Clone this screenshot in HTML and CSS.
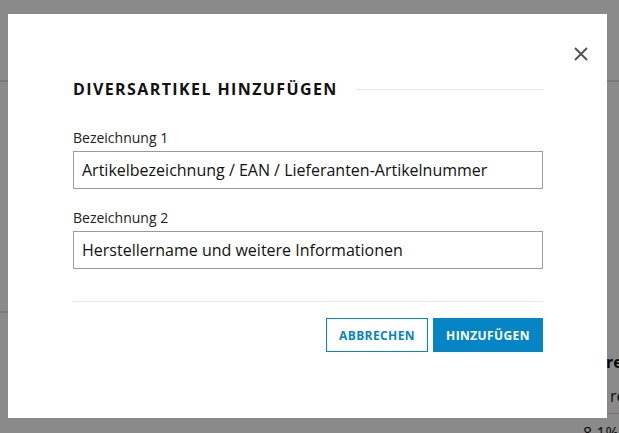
FILE: index.html
```html
<!DOCTYPE html>
<html lang="de">
<head>
<meta charset="utf-8">
<title>Diversartikel hinzufügen</title>
<link rel="stylesheet" href="styles.css">
</head>
<body>
<div class="page">
  <header class="page-header"></header>
  <main class="page-main">
    <section class="page-left"><div class="left-box"></div></section>
    <aside class="page-side">
      <div class="side-row side-bold">Preise</div>
      <div class="side-row side-reg">rei</div>
      <div class="side-sep"></div>
      <div class="side-num">8,1%</div>
    </aside>
  </main>
</div>
<div class="overlay"></div>
<div class="modal" role="dialog" aria-labelledby="modal-title">
  <button class="modal-close" type="button" aria-label="Schließen">
    <svg width="14" height="14" viewBox="0 0 14 14" aria-hidden="true"><path d="M1 1L13 13M13 1L1 13" stroke="#555" stroke-width="2" fill="none"/></svg>
  </button>
  <div class="modal-title-row">
    <h2 class="modal-title" id="modal-title">DIVERSARTIKEL HINZUFÜGEN</h2>
    <span class="modal-title-line"></span>
  </div>
  <label class="field-label" for="b1">Bezeichnung 1</label>
  <input class="field-input" id="b1" type="text" placeholder="Artikelbezeichnung / EAN / Lieferanten-Artikelnummer">
  <label class="field-label field-label-2" for="b2">Bezeichnung 2</label>
  <input class="field-input" id="b2" type="text" placeholder="Herstellername und weitere Informationen">
  <div class="modal-divider"></div>
  <div class="modal-actions">
    <button class="btn btn-outline" type="button">ABBRECHEN</button>
    <button class="btn btn-primary" type="button">HINZUFÜGEN</button>
  </div>
</div>
</body>
</html>
```
FILE: styles.css
```css
* { box-sizing: border-box; }
html, body { margin: 0; padding: 0; }
body {
  font-family: "Open Sans", "DejaVu Sans", sans-serif;
  background: #fff;
  overflow: hidden;
  width: 619px;
  height: 433px;
}
.page { width: 900px; }
.page-header {
  height: 82px;
  border-bottom: 2px solid #e2e2e2;
}
.page-main { display: flex; }
.page-left { flex: 0 0 583px; }
.left-box {
  height: 231px;
  border-bottom: 2px solid #e2e2e2;
}
.page-side {
  flex: 0 0 300px;
  padding-top: 269px;
  color: #111;
  font-size: 16px;
  line-height: 22px;
}
.side-row { white-space: nowrap; }
.side-bold { font-weight: 700; padding-left: 13px; }
.side-reg { margin-top: 12px; padding-left: 27px; color: #222; }
.side-sep {
  margin-top: 6px;
  height: 1px;
  background: #d8d8d8;
}
.side-num { margin-top: 8px; color: #222; }
.overlay {
  position: fixed;
  inset: 0;
  background: rgba(0, 0, 0, 0.46);
}
.modal {
  position: fixed;
  left: 8px;
  top: 14px;
  width: 599px;
  height: 404px;
  background: #fff;
  padding: 64px 64px 0 65px;
}
.modal-close {
  position: absolute;
  top: 32px;
  right: 18px;
  width: 16px;
  height: 16px;
  padding: 1px;
  border: 0;
  background: none;
  cursor: pointer;
}
.modal-close svg { display: block; }
.modal-title-row {
  display: flex;
  align-items: center;
  gap: 18px;
  height: 23px;
}
.modal-title {
  margin: 0;
  font-size: 16px;
  line-height: 23px;
  font-weight: 700;
  letter-spacing: 1.4px;
  color: #111;
  white-space: nowrap;
}
.modal-title-line {
  flex: 1;
  height: 1px;
  background: #e6e6e6;
}
.field-label {
  display: block;
  margin-top: 27px;
  font-size: 14px;
  line-height: 20px;
  color: #222;
}
.field-label-2 { margin-top: 19px; }
.field-input {
  display: block;
  width: 100%;
  height: 38px;
  margin-top: 3px;
  padding: 0 8px;
  border: 1px solid #9a9a9a;
  border-radius: 0;
  font-family: inherit;
  font-size: 16px;
  color: #111;
  background: #fff;
  outline: none;
}
.field-input::placeholder { color: #111; opacity: 1; }
.modal-divider {
  margin-top: 32px;
  height: 1px;
  background: #e6e6e6;
}
.modal-actions {
  display: flex;
  justify-content: flex-end;
  gap: 5px;
  margin-top: 16px;
}
.btn {
  height: 34px;
  padding: 0 10px;
  font-family: inherit;
  font-size: 12px;
  font-weight: 700;
  letter-spacing: 0.4px;
  border: 1px solid #0585c6;
  border-radius: 0;
  cursor: pointer;
}
.btn-outline { width: 102px; background: #fff; color: #0585c6; }
.btn-primary { width: 110px; background: #0585c6; color: #fff; }
```
